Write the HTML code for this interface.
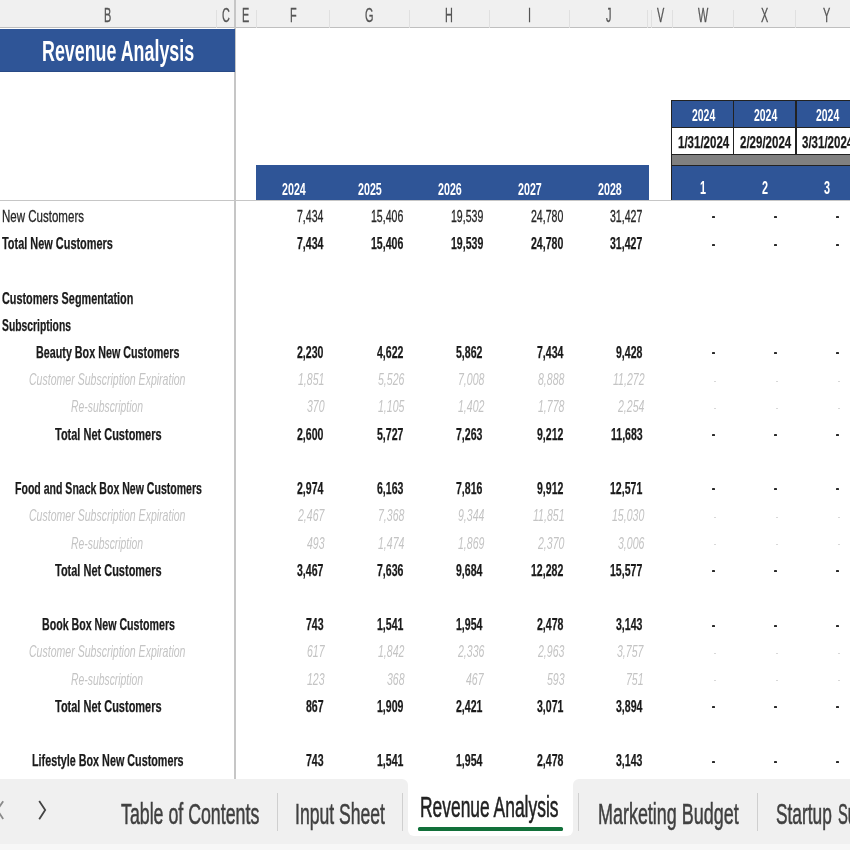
<!DOCTYPE html>
<html><head><meta charset="utf-8"><style>
html,body{margin:0;padding:0;}
body{width:850px;height:850px;overflow:hidden;position:relative;background:#ffffff;font-family:"Liberation Sans",sans-serif;}
div,span{position:absolute;}
span{white-space:nowrap;transform-origin:0 0;}
.r{-webkit-text-stroke:0.3px currentColor;}
.b{-webkit-text-stroke:0.25px currentColor;}
#wrap{position:absolute;left:0;top:0;width:850px;height:850px;filter:blur(0.6px);}
</style></head><body><div id="wrap">
<div style="left:0.00px;top:0.00px;width:850.00px;height:27.50px;background:#f0f0f0;"></div>
<div style="left:0.00px;top:26.90px;width:850.00px;height:1.60px;background:#bfbfbf;"></div>
<div style="left:216.00px;top:10.00px;width:1.00px;height:17.50px;background:#e0e0e0;"></div>
<div style="left:256.00px;top:10.00px;width:1.00px;height:17.50px;background:#e0e0e0;"></div>
<div style="left:328.90px;top:10.00px;width:1.00px;height:17.50px;background:#e0e0e0;"></div>
<div style="left:408.90px;top:10.00px;width:1.00px;height:17.50px;background:#e0e0e0;"></div>
<div style="left:488.90px;top:10.00px;width:1.00px;height:17.50px;background:#e0e0e0;"></div>
<div style="left:568.90px;top:10.00px;width:1.00px;height:17.50px;background:#e0e0e0;"></div>
<div style="left:647.00px;top:10.00px;width:1.00px;height:17.50px;background:#e0e0e0;"></div>
<div style="left:650.50px;top:10.00px;width:1.00px;height:17.50px;background:#e0e0e0;"></div>
<div style="left:671.50px;top:10.00px;width:1.00px;height:17.50px;background:#e0e0e0;"></div>
<div style="left:733.30px;top:10.00px;width:1.00px;height:17.50px;background:#e0e0e0;"></div>
<div style="left:795.10px;top:10.00px;width:1.00px;height:17.50px;background:#e0e0e0;"></div>
<div style="left:234.20px;top:0.00px;width:1.60px;height:779.00px;background:#c6c6c6;"></div>
<div style="left:0.00px;top:28.50px;width:234.70px;height:43.30px;background:#2f5597;"></div>
<div style="left:0.00px;top:70.80px;width:234.70px;height:1.00px;background:#284a86;"></div>
<span style="left:41.80px;top:35.81px;font-size:30px;line-height:30px;color:#ffffff;transform:scaleX(0.5951);font-weight:bold;">Revenue Analysis</span>
<span class="r" style="left:104.38px;top:4.97px;font-size:20px;line-height:20px;color:#555555;transform:scaleX(0.5450);">B</span>
<span class="r" style="left:222.08px;top:4.97px;font-size:20px;line-height:20px;color:#555555;transform:scaleX(0.5450);">C</span>
<span class="r" style="left:242.38px;top:4.97px;font-size:20px;line-height:20px;color:#555555;transform:scaleX(0.5450);">E</span>
<span class="r" style="left:289.68px;top:4.97px;font-size:20px;line-height:20px;color:#555555;transform:scaleX(0.5450);">F</span>
<span class="r" style="left:365.15px;top:4.97px;font-size:20px;line-height:20px;color:#555555;transform:scaleX(0.5450);">G</span>
<span class="r" style="left:445.48px;top:4.97px;font-size:20px;line-height:20px;color:#555555;transform:scaleX(0.5450);">H</span>
<span class="r" style="left:527.87px;top:4.97px;font-size:20px;line-height:20px;color:#555555;transform:scaleX(0.5450);">I</span>
<span class="r" style="left:606.48px;top:4.97px;font-size:20px;line-height:20px;color:#555555;transform:scaleX(0.5450);">J</span>
<span class="r" style="left:656.88px;top:4.97px;font-size:20px;line-height:20px;color:#555555;transform:scaleX(0.5450);">V</span>
<span class="r" style="left:697.85px;top:4.97px;font-size:20px;line-height:20px;color:#555555;transform:scaleX(0.5450);">W</span>
<span class="r" style="left:761.38px;top:4.97px;font-size:20px;line-height:20px;color:#555555;transform:scaleX(0.5450);">X</span>
<span class="r" style="left:823.38px;top:4.97px;font-size:20px;line-height:20px;color:#555555;transform:scaleX(0.5450);">Y</span>
<div style="left:0.00px;top:199.60px;width:850.00px;height:1.20px;background:#c6c6c6;"></div>
<div style="left:255.80px;top:164.80px;width:392.80px;height:35.00px;background:#2f5597;"></div>
<span style="left:281.60px;top:180.51px;font-size:17px;line-height:17px;color:#ffffff;transform:scaleX(0.6292);font-weight:bold;">2024</span>
<span style="left:357.80px;top:180.51px;font-size:17px;line-height:17px;color:#ffffff;transform:scaleX(0.6292);font-weight:bold;">2025</span>
<span style="left:437.90px;top:180.51px;font-size:17px;line-height:17px;color:#ffffff;transform:scaleX(0.6292);font-weight:bold;">2026</span>
<span style="left:517.50px;top:180.51px;font-size:17px;line-height:17px;color:#ffffff;transform:scaleX(0.6292);font-weight:bold;">2027</span>
<span style="left:597.80px;top:180.51px;font-size:17px;line-height:17px;color:#ffffff;transform:scaleX(0.6292);font-weight:bold;">2028</span>
<div style="left:671.30px;top:99.50px;width:178.70px;height:100.30px;background:#222222;"></div>
<div style="left:672.30px;top:100.50px;width:177.70px;height:26.00px;background:#2f5597;"></div>
<div style="left:672.30px;top:127.50px;width:177.70px;height:26.30px;background:#ffffff;"></div>
<div style="left:672.30px;top:154.80px;width:177.70px;height:9.80px;background:#808080;"></div>
<div style="left:672.30px;top:165.50px;width:177.70px;height:34.30px;background:#2f5597;"></div>
<div style="left:733.10px;top:99.50px;width:1.40px;height:55.00px;background:#222222;"></div>
<div style="left:795.30px;top:99.50px;width:1.40px;height:55.00px;background:#222222;"></div>
<span style="left:691.70px;top:106.71px;font-size:17px;line-height:17px;color:#ffffff;transform:scaleX(0.6134);font-weight:bold;">2024</span>
<span class="b" style="left:677.70px;top:133.91px;font-size:17px;line-height:17px;color:#1a1a1a;transform:scaleX(0.6768);font-weight:bold;">1/31/2024</span>
<span style="left:700.29px;top:180.19px;font-size:17.5px;line-height:17.5px;color:#ffffff;transform:scaleX(0.6200);font-weight:bold;">1</span>
<span style="left:753.70px;top:106.71px;font-size:17px;line-height:17px;color:#ffffff;transform:scaleX(0.6134);font-weight:bold;">2024</span>
<span class="b" style="left:739.70px;top:133.91px;font-size:17px;line-height:17px;color:#1a1a1a;transform:scaleX(0.6768);font-weight:bold;">2/29/2024</span>
<span style="left:762.29px;top:180.19px;font-size:17.5px;line-height:17.5px;color:#ffffff;transform:scaleX(0.6200);font-weight:bold;">2</span>
<span style="left:815.90px;top:106.71px;font-size:17px;line-height:17px;color:#ffffff;transform:scaleX(0.6134);font-weight:bold;">2024</span>
<span class="b" style="left:801.90px;top:133.91px;font-size:17px;line-height:17px;color:#1a1a1a;transform:scaleX(0.6768);font-weight:bold;">3/31/2024</span>
<span style="left:824.49px;top:180.19px;font-size:17.5px;line-height:17.5px;color:#ffffff;transform:scaleX(0.6200);font-weight:bold;">3</span>
<span class="r" style="left:2.40px;top:207.93px;font-size:16.5px;line-height:16.5px;color:#262626;transform:scaleX(0.6985);">New Customers</span>
<span class="r" style="left:296.85px;top:207.93px;font-size:16.5px;line-height:16.5px;color:#262626;transform:scaleX(0.6400);">7,434</span>
<span class="r" style="left:370.99px;top:207.93px;font-size:16.5px;line-height:16.5px;color:#262626;transform:scaleX(0.6400);">15,406</span>
<span class="r" style="left:450.59px;top:207.93px;font-size:16.5px;line-height:16.5px;color:#262626;transform:scaleX(0.6400);">19,539</span>
<span class="r" style="left:530.69px;top:207.93px;font-size:16.5px;line-height:16.5px;color:#262626;transform:scaleX(0.6400);">24,780</span>
<span class="r" style="left:610.29px;top:207.93px;font-size:16.5px;line-height:16.5px;color:#262626;transform:scaleX(0.6400);">31,427</span>
<div style="left:712.00px;top:216.00px;width:3.40px;height:2.00px;background:#2a2a2a;border-radius:0.6px;"></div>
<div style="left:774.00px;top:216.00px;width:3.40px;height:2.00px;background:#2a2a2a;border-radius:0.6px;"></div>
<div style="left:836.00px;top:216.00px;width:3.40px;height:2.00px;background:#2a2a2a;border-radius:0.6px;"></div>
<span class="b" style="left:2.40px;top:235.15px;font-size:16.5px;line-height:16.5px;color:#1a1a1a;transform:scaleX(0.6622);font-weight:bold;">Total New Customers</span>
<span class="b" style="left:296.85px;top:235.15px;font-size:16.5px;line-height:16.5px;color:#1a1a1a;transform:scaleX(0.6400);font-weight:bold;">7,434</span>
<span class="b" style="left:370.99px;top:235.15px;font-size:16.5px;line-height:16.5px;color:#1a1a1a;transform:scaleX(0.6400);font-weight:bold;">15,406</span>
<span class="b" style="left:450.59px;top:235.15px;font-size:16.5px;line-height:16.5px;color:#1a1a1a;transform:scaleX(0.6400);font-weight:bold;">19,539</span>
<span class="b" style="left:530.69px;top:235.15px;font-size:16.5px;line-height:16.5px;color:#1a1a1a;transform:scaleX(0.6400);font-weight:bold;">24,780</span>
<span class="b" style="left:610.29px;top:235.15px;font-size:16.5px;line-height:16.5px;color:#1a1a1a;transform:scaleX(0.6400);font-weight:bold;">31,427</span>
<div style="left:712.00px;top:244.00px;width:3.40px;height:2.00px;background:#2a2a2a;border-radius:0.6px;"></div>
<div style="left:774.00px;top:244.00px;width:3.40px;height:2.00px;background:#2a2a2a;border-radius:0.6px;"></div>
<div style="left:836.00px;top:244.00px;width:3.40px;height:2.00px;background:#2a2a2a;border-radius:0.6px;"></div>
<span class="b" style="left:2.40px;top:289.59px;font-size:16.5px;line-height:16.5px;color:#1a1a1a;transform:scaleX(0.6568);font-weight:bold;">Customers Segmentation</span>
<span class="b" style="left:2.40px;top:316.81px;font-size:16.5px;line-height:16.5px;color:#1a1a1a;transform:scaleX(0.6270);font-weight:bold;">Subscriptions</span>
<span class="b" style="left:36.10px;top:344.03px;font-size:16.5px;line-height:16.5px;color:#1a1a1a;transform:scaleX(0.6517);font-weight:bold;">Beauty Box New Customers</span>
<span class="b" style="left:296.85px;top:344.03px;font-size:16.5px;line-height:16.5px;color:#1a1a1a;transform:scaleX(0.6400);font-weight:bold;">2,230</span>
<span class="b" style="left:376.85px;top:344.03px;font-size:16.5px;line-height:16.5px;color:#1a1a1a;transform:scaleX(0.6400);font-weight:bold;">4,622</span>
<span class="b" style="left:456.45px;top:344.03px;font-size:16.5px;line-height:16.5px;color:#1a1a1a;transform:scaleX(0.6400);font-weight:bold;">5,862</span>
<span class="b" style="left:536.55px;top:344.03px;font-size:16.5px;line-height:16.5px;color:#1a1a1a;transform:scaleX(0.6400);font-weight:bold;">7,434</span>
<span class="b" style="left:616.15px;top:344.03px;font-size:16.5px;line-height:16.5px;color:#1a1a1a;transform:scaleX(0.6400);font-weight:bold;">9,428</span>
<div style="left:712.00px;top:352.00px;width:3.40px;height:2.00px;background:#2a2a2a;border-radius:0.6px;"></div>
<div style="left:774.00px;top:352.00px;width:3.40px;height:2.00px;background:#2a2a2a;border-radius:0.6px;"></div>
<div style="left:836.00px;top:352.00px;width:3.40px;height:2.00px;background:#2a2a2a;border-radius:0.6px;"></div>
<span style="left:29.40px;top:371.25px;font-size:16.5px;line-height:16.5px;color:#c4c4c4;transform:scaleX(0.6391);font-style:italic;">Customer Subscription Expiration</span>
<span style="left:298.35px;top:371.25px;font-size:16.5px;line-height:16.5px;color:#c4c4c4;transform:scaleX(0.6400);font-style:italic;">1,851</span>
<span style="left:378.35px;top:371.25px;font-size:16.5px;line-height:16.5px;color:#c4c4c4;transform:scaleX(0.6400);font-style:italic;">5,526</span>
<span style="left:457.95px;top:371.25px;font-size:16.5px;line-height:16.5px;color:#c4c4c4;transform:scaleX(0.6400);font-style:italic;">7,008</span>
<span style="left:538.05px;top:371.25px;font-size:16.5px;line-height:16.5px;color:#c4c4c4;transform:scaleX(0.6400);font-style:italic;">8,888</span>
<span style="left:612.58px;top:371.25px;font-size:16.5px;line-height:16.5px;color:#c4c4c4;transform:scaleX(0.6400);font-style:italic;">11,272</span>
<div style="left:713.50px;top:380.50px;width:2.50px;height:1.20px;background:#d8d8d8;"></div>
<div style="left:775.50px;top:380.50px;width:2.50px;height:1.20px;background:#d8d8d8;"></div>
<div style="left:837.50px;top:380.50px;width:2.50px;height:1.20px;background:#d8d8d8;"></div>
<span style="left:71.10px;top:398.47px;font-size:16.5px;line-height:16.5px;color:#c4c4c4;transform:scaleX(0.6287);font-style:italic;">Re-subscription</span>
<span style="left:307.16px;top:398.47px;font-size:16.5px;line-height:16.5px;color:#c4c4c4;transform:scaleX(0.6400);font-style:italic;">370</span>
<span style="left:378.35px;top:398.47px;font-size:16.5px;line-height:16.5px;color:#c4c4c4;transform:scaleX(0.6400);font-style:italic;">1,105</span>
<span style="left:457.95px;top:398.47px;font-size:16.5px;line-height:16.5px;color:#c4c4c4;transform:scaleX(0.6400);font-style:italic;">1,402</span>
<span style="left:538.05px;top:398.47px;font-size:16.5px;line-height:16.5px;color:#c4c4c4;transform:scaleX(0.6400);font-style:italic;">1,778</span>
<span style="left:617.65px;top:398.47px;font-size:16.5px;line-height:16.5px;color:#c4c4c4;transform:scaleX(0.6400);font-style:italic;">2,254</span>
<div style="left:713.50px;top:407.50px;width:2.50px;height:1.20px;background:#d8d8d8;"></div>
<div style="left:775.50px;top:407.50px;width:2.50px;height:1.20px;background:#d8d8d8;"></div>
<div style="left:837.50px;top:407.50px;width:2.50px;height:1.20px;background:#d8d8d8;"></div>
<span class="b" style="left:54.70px;top:425.69px;font-size:16.5px;line-height:16.5px;color:#1a1a1a;transform:scaleX(0.6657);font-weight:bold;">Total Net Customers</span>
<span class="b" style="left:296.85px;top:425.69px;font-size:16.5px;line-height:16.5px;color:#1a1a1a;transform:scaleX(0.6400);font-weight:bold;">2,600</span>
<span class="b" style="left:376.85px;top:425.69px;font-size:16.5px;line-height:16.5px;color:#1a1a1a;transform:scaleX(0.6400);font-weight:bold;">5,727</span>
<span class="b" style="left:456.45px;top:425.69px;font-size:16.5px;line-height:16.5px;color:#1a1a1a;transform:scaleX(0.6400);font-weight:bold;">7,263</span>
<span class="b" style="left:536.55px;top:425.69px;font-size:16.5px;line-height:16.5px;color:#1a1a1a;transform:scaleX(0.6400);font-weight:bold;">9,212</span>
<span class="b" style="left:610.87px;top:425.69px;font-size:16.5px;line-height:16.5px;color:#1a1a1a;transform:scaleX(0.6400);font-weight:bold;">11,683</span>
<div style="left:712.00px;top:434.00px;width:3.40px;height:2.00px;background:#2a2a2a;border-radius:0.6px;"></div>
<div style="left:774.00px;top:434.00px;width:3.40px;height:2.00px;background:#2a2a2a;border-radius:0.6px;"></div>
<div style="left:836.00px;top:434.00px;width:3.40px;height:2.00px;background:#2a2a2a;border-radius:0.6px;"></div>
<span class="b" style="left:14.60px;top:480.13px;font-size:16.5px;line-height:16.5px;color:#1a1a1a;transform:scaleX(0.6391);font-weight:bold;">Food and Snack Box New Customers</span>
<span class="b" style="left:296.85px;top:480.13px;font-size:16.5px;line-height:16.5px;color:#1a1a1a;transform:scaleX(0.6400);font-weight:bold;">2,974</span>
<span class="b" style="left:376.85px;top:480.13px;font-size:16.5px;line-height:16.5px;color:#1a1a1a;transform:scaleX(0.6400);font-weight:bold;">6,163</span>
<span class="b" style="left:456.45px;top:480.13px;font-size:16.5px;line-height:16.5px;color:#1a1a1a;transform:scaleX(0.6400);font-weight:bold;">7,816</span>
<span class="b" style="left:536.55px;top:480.13px;font-size:16.5px;line-height:16.5px;color:#1a1a1a;transform:scaleX(0.6400);font-weight:bold;">9,912</span>
<span class="b" style="left:610.29px;top:480.13px;font-size:16.5px;line-height:16.5px;color:#1a1a1a;transform:scaleX(0.6400);font-weight:bold;">12,571</span>
<div style="left:712.00px;top:488.00px;width:3.40px;height:2.00px;background:#2a2a2a;border-radius:0.6px;"></div>
<div style="left:774.00px;top:488.00px;width:3.40px;height:2.00px;background:#2a2a2a;border-radius:0.6px;"></div>
<div style="left:836.00px;top:488.00px;width:3.40px;height:2.00px;background:#2a2a2a;border-radius:0.6px;"></div>
<span style="left:29.40px;top:507.35px;font-size:16.5px;line-height:16.5px;color:#c4c4c4;transform:scaleX(0.6391);font-style:italic;">Customer Subscription Expiration</span>
<span style="left:298.03px;top:507.35px;font-size:16.5px;line-height:16.5px;color:#c4c4c4;transform:scaleX(0.6400);font-style:italic;">2,467</span>
<span style="left:378.35px;top:507.35px;font-size:16.5px;line-height:16.5px;color:#c4c4c4;transform:scaleX(0.6400);font-style:italic;">7,368</span>
<span style="left:457.95px;top:507.35px;font-size:16.5px;line-height:16.5px;color:#c4c4c4;transform:scaleX(0.6400);font-style:italic;">9,344</span>
<span style="left:532.98px;top:507.35px;font-size:16.5px;line-height:16.5px;color:#c4c4c4;transform:scaleX(0.6400);font-style:italic;">11,851</span>
<span style="left:611.79px;top:507.35px;font-size:16.5px;line-height:16.5px;color:#c4c4c4;transform:scaleX(0.6400);font-style:italic;">15,030</span>
<div style="left:713.50px;top:516.50px;width:2.50px;height:1.20px;background:#d8d8d8;"></div>
<div style="left:775.50px;top:516.50px;width:2.50px;height:1.20px;background:#d8d8d8;"></div>
<div style="left:837.50px;top:516.50px;width:2.50px;height:1.20px;background:#d8d8d8;"></div>
<span style="left:71.10px;top:534.57px;font-size:16.5px;line-height:16.5px;color:#c4c4c4;transform:scaleX(0.6287);font-style:italic;">Re-subscription</span>
<span style="left:307.16px;top:534.57px;font-size:16.5px;line-height:16.5px;color:#c4c4c4;transform:scaleX(0.6400);font-style:italic;">493</span>
<span style="left:378.35px;top:534.57px;font-size:16.5px;line-height:16.5px;color:#c4c4c4;transform:scaleX(0.6400);font-style:italic;">1,474</span>
<span style="left:457.95px;top:534.57px;font-size:16.5px;line-height:16.5px;color:#c4c4c4;transform:scaleX(0.6400);font-style:italic;">1,869</span>
<span style="left:538.05px;top:534.57px;font-size:16.5px;line-height:16.5px;color:#c4c4c4;transform:scaleX(0.6400);font-style:italic;">2,370</span>
<span style="left:617.65px;top:534.57px;font-size:16.5px;line-height:16.5px;color:#c4c4c4;transform:scaleX(0.6400);font-style:italic;">3,006</span>
<div style="left:713.50px;top:543.50px;width:2.50px;height:1.20px;background:#d8d8d8;"></div>
<div style="left:775.50px;top:543.50px;width:2.50px;height:1.20px;background:#d8d8d8;"></div>
<div style="left:837.50px;top:543.50px;width:2.50px;height:1.20px;background:#d8d8d8;"></div>
<span class="b" style="left:54.70px;top:561.79px;font-size:16.5px;line-height:16.5px;color:#1a1a1a;transform:scaleX(0.6657);font-weight:bold;">Total Net Customers</span>
<span class="b" style="left:296.85px;top:561.79px;font-size:16.5px;line-height:16.5px;color:#1a1a1a;transform:scaleX(0.6400);font-weight:bold;">3,467</span>
<span class="b" style="left:376.85px;top:561.79px;font-size:16.5px;line-height:16.5px;color:#1a1a1a;transform:scaleX(0.6400);font-weight:bold;">7,636</span>
<span class="b" style="left:456.45px;top:561.79px;font-size:16.5px;line-height:16.5px;color:#1a1a1a;transform:scaleX(0.6400);font-weight:bold;">9,684</span>
<span class="b" style="left:530.69px;top:561.79px;font-size:16.5px;line-height:16.5px;color:#1a1a1a;transform:scaleX(0.6400);font-weight:bold;">12,282</span>
<span class="b" style="left:610.29px;top:561.79px;font-size:16.5px;line-height:16.5px;color:#1a1a1a;transform:scaleX(0.6400);font-weight:bold;">15,577</span>
<div style="left:712.00px;top:570.00px;width:3.40px;height:2.00px;background:#2a2a2a;border-radius:0.6px;"></div>
<div style="left:774.00px;top:570.00px;width:3.40px;height:2.00px;background:#2a2a2a;border-radius:0.6px;"></div>
<div style="left:836.00px;top:570.00px;width:3.40px;height:2.00px;background:#2a2a2a;border-radius:0.6px;"></div>
<span class="b" style="left:41.80px;top:616.23px;font-size:16.5px;line-height:16.5px;color:#1a1a1a;transform:scaleX(0.6446);font-weight:bold;">Book Box New Customers</span>
<span class="b" style="left:305.66px;top:616.23px;font-size:16.5px;line-height:16.5px;color:#1a1a1a;transform:scaleX(0.6400);font-weight:bold;">743</span>
<span class="b" style="left:376.85px;top:616.23px;font-size:16.5px;line-height:16.5px;color:#1a1a1a;transform:scaleX(0.6400);font-weight:bold;">1,541</span>
<span class="b" style="left:456.45px;top:616.23px;font-size:16.5px;line-height:16.5px;color:#1a1a1a;transform:scaleX(0.6400);font-weight:bold;">1,954</span>
<span class="b" style="left:536.55px;top:616.23px;font-size:16.5px;line-height:16.5px;color:#1a1a1a;transform:scaleX(0.6400);font-weight:bold;">2,478</span>
<span class="b" style="left:616.15px;top:616.23px;font-size:16.5px;line-height:16.5px;color:#1a1a1a;transform:scaleX(0.6400);font-weight:bold;">3,143</span>
<div style="left:712.00px;top:625.00px;width:3.40px;height:2.00px;background:#2a2a2a;border-radius:0.6px;"></div>
<div style="left:774.00px;top:625.00px;width:3.40px;height:2.00px;background:#2a2a2a;border-radius:0.6px;"></div>
<div style="left:836.00px;top:625.00px;width:3.40px;height:2.00px;background:#2a2a2a;border-radius:0.6px;"></div>
<span style="left:29.40px;top:643.45px;font-size:16.5px;line-height:16.5px;color:#c4c4c4;transform:scaleX(0.6391);font-style:italic;">Customer Subscription Expiration</span>
<span style="left:306.85px;top:643.45px;font-size:16.5px;line-height:16.5px;color:#c4c4c4;transform:scaleX(0.6400);font-style:italic;">617</span>
<span style="left:378.35px;top:643.45px;font-size:16.5px;line-height:16.5px;color:#c4c4c4;transform:scaleX(0.6400);font-style:italic;">1,842</span>
<span style="left:457.95px;top:643.45px;font-size:16.5px;line-height:16.5px;color:#c4c4c4;transform:scaleX(0.6400);font-style:italic;">2,336</span>
<span style="left:538.05px;top:643.45px;font-size:16.5px;line-height:16.5px;color:#c4c4c4;transform:scaleX(0.6400);font-style:italic;">2,963</span>
<span style="left:617.33px;top:643.45px;font-size:16.5px;line-height:16.5px;color:#c4c4c4;transform:scaleX(0.6400);font-style:italic;">3,757</span>
<div style="left:713.50px;top:652.50px;width:2.50px;height:1.20px;background:#d8d8d8;"></div>
<div style="left:775.50px;top:652.50px;width:2.50px;height:1.20px;background:#d8d8d8;"></div>
<div style="left:837.50px;top:652.50px;width:2.50px;height:1.20px;background:#d8d8d8;"></div>
<span style="left:71.10px;top:670.67px;font-size:16.5px;line-height:16.5px;color:#c4c4c4;transform:scaleX(0.6287);font-style:italic;">Re-subscription</span>
<span style="left:307.16px;top:670.67px;font-size:16.5px;line-height:16.5px;color:#c4c4c4;transform:scaleX(0.6400);font-style:italic;">123</span>
<span style="left:387.16px;top:670.67px;font-size:16.5px;line-height:16.5px;color:#c4c4c4;transform:scaleX(0.6400);font-style:italic;">368</span>
<span style="left:466.45px;top:670.67px;font-size:16.5px;line-height:16.5px;color:#c4c4c4;transform:scaleX(0.6400);font-style:italic;">467</span>
<span style="left:546.86px;top:670.67px;font-size:16.5px;line-height:16.5px;color:#c4c4c4;transform:scaleX(0.6400);font-style:italic;">593</span>
<span style="left:626.46px;top:670.67px;font-size:16.5px;line-height:16.5px;color:#c4c4c4;transform:scaleX(0.6400);font-style:italic;">751</span>
<div style="left:713.50px;top:679.50px;width:2.50px;height:1.20px;background:#d8d8d8;"></div>
<div style="left:775.50px;top:679.50px;width:2.50px;height:1.20px;background:#d8d8d8;"></div>
<div style="left:837.50px;top:679.50px;width:2.50px;height:1.20px;background:#d8d8d8;"></div>
<span class="b" style="left:54.70px;top:697.89px;font-size:16.5px;line-height:16.5px;color:#1a1a1a;transform:scaleX(0.6657);font-weight:bold;">Total Net Customers</span>
<span class="b" style="left:305.66px;top:697.89px;font-size:16.5px;line-height:16.5px;color:#1a1a1a;transform:scaleX(0.6400);font-weight:bold;">867</span>
<span class="b" style="left:376.85px;top:697.89px;font-size:16.5px;line-height:16.5px;color:#1a1a1a;transform:scaleX(0.6400);font-weight:bold;">1,909</span>
<span class="b" style="left:456.45px;top:697.89px;font-size:16.5px;line-height:16.5px;color:#1a1a1a;transform:scaleX(0.6400);font-weight:bold;">2,421</span>
<span class="b" style="left:536.55px;top:697.89px;font-size:16.5px;line-height:16.5px;color:#1a1a1a;transform:scaleX(0.6400);font-weight:bold;">3,071</span>
<span class="b" style="left:616.15px;top:697.89px;font-size:16.5px;line-height:16.5px;color:#1a1a1a;transform:scaleX(0.6400);font-weight:bold;">3,894</span>
<div style="left:712.00px;top:706.00px;width:3.40px;height:2.00px;background:#2a2a2a;border-radius:0.6px;"></div>
<div style="left:774.00px;top:706.00px;width:3.40px;height:2.00px;background:#2a2a2a;border-radius:0.6px;"></div>
<div style="left:836.00px;top:706.00px;width:3.40px;height:2.00px;background:#2a2a2a;border-radius:0.6px;"></div>
<span class="b" style="left:32.20px;top:752.33px;font-size:16.5px;line-height:16.5px;color:#1a1a1a;transform:scaleX(0.6535);font-weight:bold;">Lifestyle Box New Customers</span>
<span class="b" style="left:305.66px;top:752.33px;font-size:16.5px;line-height:16.5px;color:#1a1a1a;transform:scaleX(0.6400);font-weight:bold;">743</span>
<span class="b" style="left:376.85px;top:752.33px;font-size:16.5px;line-height:16.5px;color:#1a1a1a;transform:scaleX(0.6400);font-weight:bold;">1,541</span>
<span class="b" style="left:456.45px;top:752.33px;font-size:16.5px;line-height:16.5px;color:#1a1a1a;transform:scaleX(0.6400);font-weight:bold;">1,954</span>
<span class="b" style="left:536.55px;top:752.33px;font-size:16.5px;line-height:16.5px;color:#1a1a1a;transform:scaleX(0.6400);font-weight:bold;">2,478</span>
<span class="b" style="left:616.15px;top:752.33px;font-size:16.5px;line-height:16.5px;color:#1a1a1a;transform:scaleX(0.6400);font-weight:bold;">3,143</span>
<div style="left:712.00px;top:761.00px;width:3.40px;height:2.00px;background:#2a2a2a;border-radius:0.6px;"></div>
<div style="left:774.00px;top:761.00px;width:3.40px;height:2.00px;background:#2a2a2a;border-radius:0.6px;"></div>
<div style="left:836.00px;top:761.00px;width:3.40px;height:2.00px;background:#2a2a2a;border-radius:0.6px;"></div>
<div style="left:0.00px;top:779.00px;width:407.60px;height:65.00px;background:#f0f0f0;border-top-right-radius:6px;"></div>
<div style="left:573.40px;top:779.00px;width:276.60px;height:65.00px;background:#f0f0f0;border-top-left-radius:6px;"></div>
<div style="left:407.60px;top:820.00px;width:165.80px;height:24.00px;background:#f0f0f0;"></div>
<div style="left:0.00px;top:844.00px;width:850.00px;height:6.00px;background:#f7f7f7;"></div>
<div style="left:407.60px;top:770.00px;width:165.80px;height:66.40px;background:#ffffff;border-radius:0 0 6px 6px;"></div>
<div style="left:418.10px;top:826.60px;width:144.50px;height:4.30px;background:#12703a;border-radius:1.5px;"></div>
<div style="left:277.00px;top:792.50px;width:1.00px;height:38.20px;background:#cfcfcf;"></div>
<div style="left:401.80px;top:792.50px;width:1.00px;height:38.20px;background:#cfcfcf;"></div>
<div style="left:577.90px;top:792.50px;width:1.00px;height:38.20px;background:#cfcfcf;"></div>
<div style="left:756.50px;top:792.50px;width:1.00px;height:38.20px;background:#cfcfcf;"></div>
<span class="r" style="left:120.50px;top:798.93px;font-size:29.5px;line-height:29.5px;color:#404040;transform:scaleX(0.6022);-webkit-text-stroke:0.55px #404040;">Table of Contents</span>
<span class="r" style="left:295.20px;top:798.93px;font-size:29.5px;line-height:29.5px;color:#404040;transform:scaleX(0.5965);-webkit-text-stroke:0.55px #404040;">Input Sheet</span>
<span class="r" style="left:419.50px;top:792.43px;font-size:29.5px;line-height:29.5px;color:#222222;transform:scaleX(0.5906);-webkit-text-stroke:0.55px #222222;">Revenue Analysis</span>
<span class="r" style="left:597.50px;top:798.93px;font-size:29.5px;line-height:29.5px;color:#404040;transform:scaleX(0.6084);-webkit-text-stroke:0.55px #404040;">Marketing Budget</span>
<span class="r" style="left:776.00px;top:798.93px;font-size:29.5px;line-height:29.5px;color:#404040;transform:scaleX(0.5865);-webkit-text-stroke:0.55px #404040;">Startup</span>
<span class="r" style="left:838.30px;top:798.93px;font-size:29.5px;line-height:29.5px;color:#404040;transform:scaleX(0.5000);-webkit-text-stroke:0.55px #404040;">Summary</span>
<svg style="position:absolute;left:0;top:795px" width="60" height="30"><polyline points="3.2,6.2 -2.8,15 3.2,24" fill="none" stroke="#8a8a8a" stroke-width="1.8"/><polyline points="39.2,5.9 45.2,15 39.2,24.2" fill="none" stroke="#444" stroke-width="1.8"/></svg>
</div></body></html>
